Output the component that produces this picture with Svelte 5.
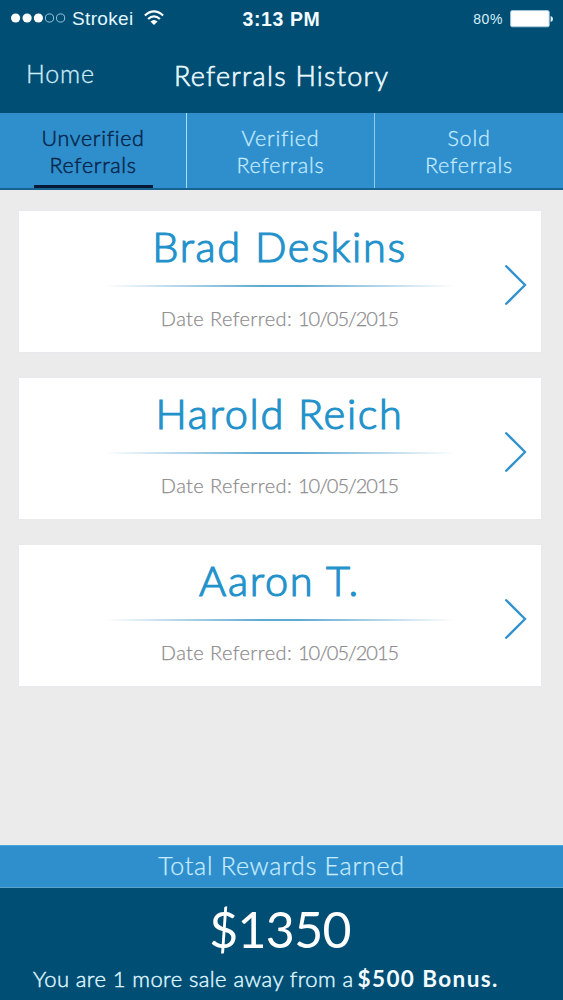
<script>
  const tabs = [
    { label: 'Unverified', active: true },
    { label: 'Verified', active: false },
    { label: 'Sold', active: false }
  ];
  const referrals = [
    { name: 'Brad Deskins', date: '10/05/2015' },
    { name: 'Harold Reich', date: '10/05/2015' },
    { name: 'Aaron T.', date: '10/05/2015' }
  ];
</script>

<div class="screen">
  <header>
    <div class="status">
      <div class="carrier">
        <svg class="dots" width="55" height="12" viewBox="0 0 55 12">
          <g fill="#fff">
            <circle cx="4.6" cy="6" r="4.6" />
            <circle cx="16.1" cy="6" r="4.6" />
            <circle cx="27.4" cy="6" r="4.6" />
          </g>
          <g fill="none" stroke="#a9cfe4" stroke-width="0.9">
            <circle cx="38.5" cy="6" r="4.1" />
            <circle cx="49.6" cy="6" r="4.1" />
          </g>
        </svg>
        <span>Strokei</span>
        <svg class="wifi" width="20" height="16" viewBox="0 0 20 16">
          <g fill="none" stroke="#fff" stroke-width="2.3">
            <path d="M0.9 5.5 Q10 -2.7 19.1 5.5" />
            <path d="M4.1 9 Q10 3.7 15.9 9" />
          </g>
          <path d="M6.4 11.5 Q10 8.3 13.6 11.5 L10 15 Z" fill="#fff" />
        </svg>
      </div>
      <strong>3:13 PM</strong>
      <div class="power">
        <span>80%</span>
        <svg width="44" height="18" viewBox="0 0 44 18">
          <rect x="0.6" y="0.6" width="38.6" height="16.2" rx="1.6" fill="#fff" stroke="#a9cbdc" stroke-width="0.9" />
          <path d="M40.6 6 Q43 6.3 43 9 Q43 11.7 40.6 12 Z" fill="#e5f6fd" />
        </svg>
      </div>
    </div>
    <div class="nav">
      <span class="home">Home</span>
      <h1>Referrals History</h1>
    </div>
  </header>

  <nav class="tabs">
    {#each tabs as tab}
      <div class="tab" class:active={tab.active}>
        <span>{tab.label}</span>
        <span>Referrals</span>
      </div>
    {/each}
  </nav>

  <main>
    {#each referrals as person}
      <article>
        <div class="info">
          <h2>{person.name}</h2>
          <div class="rule"></div>
          <p>Date Referred: <time>{person.date}</time></p>
        </div>
        <svg class="chevron" width="22" height="40" viewBox="0 0 22 40">
          <path d="M1.2 1.2 L20 20 L1.2 38.8" fill="none" stroke="#3192cc" stroke-width="2.3" stroke-linecap="round" />
        </svg>
      </article>
    {/each}
  </main>

  <footer>
    <div class="total">Total Rewards Earned</div>
    <div class="amount">$1350</div>
    <div class="bonus"><span>You are 1 more sale away from a</span><b>$500 Bonus.</b></div>
  </footer>
</div>

<style>
  .screen {
    width: 563px;
    height: 1000px;
    display: flex;
    flex-direction: column;
    overflow: hidden;
    background: #ecebec;
    font-family: Lato, "Open Sans", sans-serif;
    color: #fff;
    white-space: nowrap;
  }
  header {
    height: 113px;
    background: #004e74;
  }
  .status {
    height: 38px;
    display: grid;
    grid-template-columns: 1fr auto 1fr;
    align-items: center;
    font-family: "Liberation Sans", sans-serif;
  }
  .carrier {
    display: flex;
    align-items: center;
    padding-left: 11px;
    font-size: 19px;
    letter-spacing: 0.35px;
    color: #e3f6fe;
  }
  .carrier span { margin-left: 6px; }
  .dots { margin-top: -3px; }
  .wifi { margin: -3px 0 0 10px; }
  .status strong {
    font-size: 19.5px;
    line-height: 38px;
    letter-spacing: 0.6px;
    color: #f2fbff;
  }
  .power {
    display: flex;
    align-items: center;
    justify-content: flex-end;
    gap: 7px;
    padding-right: 9px;
    font-size: 14px;
    letter-spacing: 0.6px;
    color: #d7f0fa;
  }
  .nav {
    display: grid;
    grid-template-columns: 174px 1fr;
    height: 75px;
  }
  .home {
    padding-left: 26px;
    font-size: 25px;
    font-weight: 300;
    line-height: 70px;
    letter-spacing: 0.8px;
    color: #cfedfa;
    -webkit-text-stroke: 0.3px currentColor;
  }
  h1 {
    margin: 0;
    font-size: 27px;
    font-weight: 300;
    line-height: 75px;
    letter-spacing: 1.25px;
    color: #e9f9ff;
    -webkit-text-stroke: 0.65px currentColor;
  }
  .tabs {
    height: 75px;
    display: grid;
    grid-template-columns: 187px 188px 188px;
    background: #2f8fcd;
    border-bottom: 2px solid #17628f;
  }
  .tab {
    display: flex;
    flex-direction: column;
    align-items: center;
    box-sizing: border-box;
    padding-top: 12px;
    border-right: 1px solid #8ecbed;
    font-size: 21.5px;
    font-weight: 300;
    line-height: 26.5px;
    letter-spacing: 0.8px;
    color: #c4ebff;
    -webkit-text-stroke: 0.3px currentColor;
  }
  .tab:last-child { border-right: 0; }
  .tab.active {
    color: #07264a;
    border-right-color: #a3e2fb;
    letter-spacing: 0.7px;
    -webkit-text-stroke-width: 0.5px;
  }
  .tab.active::after {
    content: "";
    width: 119px;
    height: 3px;
    margin-top: 7px;
    background: #061a36;
  }
  main {
    flex: 1;
    display: flex;
    flex-direction: column;
    gap: 26px;
    padding: 21px 22px 0 19px;
  }
  article {
    height: 141px;
    display: grid;
    grid-template-columns: 1fr 37px;
    align-items: center;
    background: #fff;
    box-shadow: 0 0 2px #e4e3e6;
  }
  .info {
    display: flex;
    flex-direction: column;
    align-items: center;
    height: 141px;
    padding-left: 36px;
  }
  h2 {
    margin: 0;
    font-size: 41.5px;
    font-weight: 300;
    line-height: 71px;
    height: 74px;
    letter-spacing: 1.7px;
    color: #2392cb;
    -webkit-text-stroke: 1.2px currentColor;
  }
  .rule {
    width: 350px;
    height: 1.5px;
    background: linear-gradient(90deg, transparent, #60a9d2 45%, #60a9d2 55%, transparent);
  }
  p {
    margin: 16px 0 0;
    font-size: 20px;
    font-weight: 300;
    line-height: 30px;
    letter-spacing: 0.4px;
    color: #8d8b8e;
    -webkit-text-stroke: 0.25px currentColor;
  }
  time { letter-spacing: -1px; }
  .chevron { margin: 6px 0 0 0.5px; }
  footer {
    height: 155px;
    background: #004e74;
    text-align: center;
  }
  .total {
    height: 41px;
    border-top: 1px solid #4ba6dc;
    border-bottom: 1px solid #5aa4c9;
    background: #2f8fcd;
    font-size: 25px;
    font-weight: 300;
    line-height: 38px;
    letter-spacing: 0.75px;
    color: #c9edff;
    -webkit-text-stroke: 0.25px currentColor;
  }
  .amount {
    height: 76px;
    padding-right: 3px;
    font-size: 50px;
    line-height: 82px;
    letter-spacing: -0.7px;
  }
  .bonus {
    display: flex;
    align-items: baseline;
    padding-left: 33px;
    gap: 4px;
    font-size: 22px;
    font-weight: 300;
    line-height: 30px;
    letter-spacing: 0.42px;
    color: #dff5ff;
    -webkit-text-stroke: 0.45px currentColor;
  }
  .bonus b {
    font-size: 22.5px;
    font-weight: 700;
    letter-spacing: 1.4px;
    color: #f2fbff;
    -webkit-text-stroke: 0;
  }
</style>
